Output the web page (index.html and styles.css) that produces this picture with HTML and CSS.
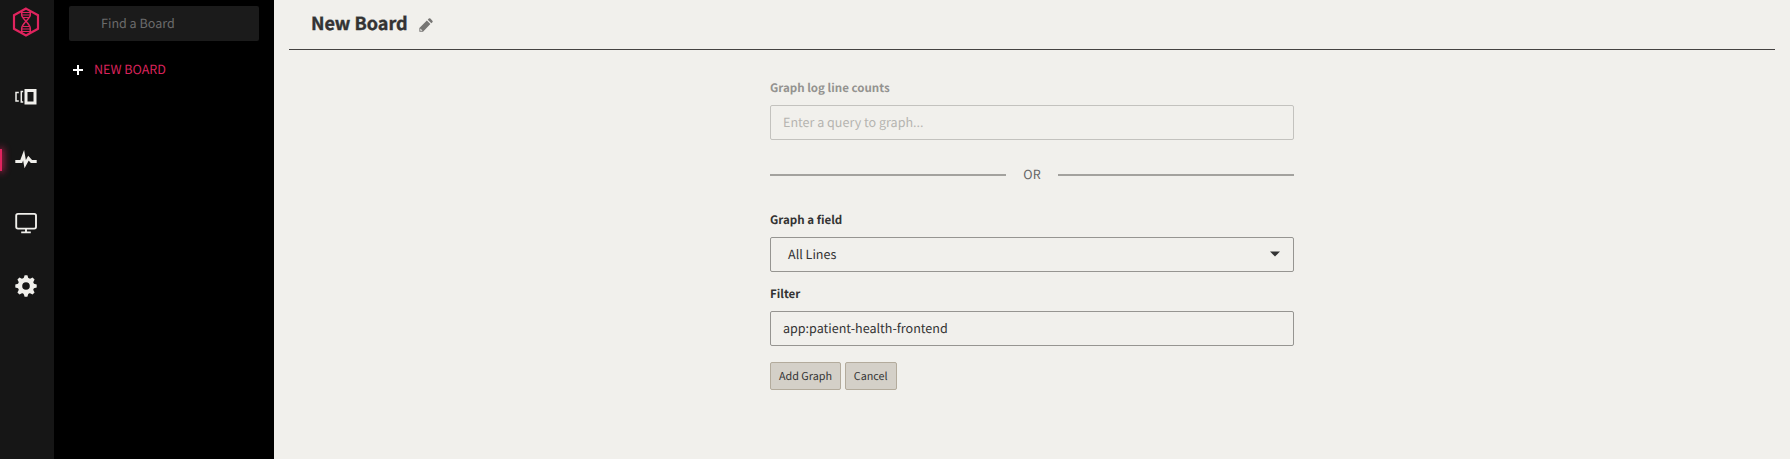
FILE: index.html
```html
<!DOCTYPE html>
<html lang="en">
<head>
<meta charset="utf-8">
<title>New Board</title>
<link rel="stylesheet" href="styles.css">
</head>
<body>
<div class="app">
  <nav class="rail">
    <a class="rail-logo">
      <svg width="28" height="30" viewBox="0 0 28 30" fill="none" stroke="#e0245e">
        <path d="M14 1.600 26 8.200V21.800L14 28.400 2 21.800V8.200Z" stroke-width="2.200"/>
        <path d="M9.700 4.200V8c0 4 8.600 8 8.600 13.500V26M18.300 4.200V8c0 4-8.600 8-8.600 13.500V26" stroke-width="1.500"/>
        <path d="M10 5.500h8M10 8h8M11 10.500h6M11 19.500h6M10 22h8M10 24.500h8" stroke-width="1.200"/>
      </svg>
    </a>
    <a class="rail-item">
      <svg width="24" height="24" viewBox="0 0 24 24" fill="none" stroke="#f0efeb">
        <path d="M12 5.500h9v12.500h-9z" stroke-width="3"/>
        <path d="M9.200 6.500H7.300v10.500h1.900M4.800 7.500H2v8.500h2.800" stroke-width="1.500"/>
      </svg>
    </a>
    <a class="rail-item rail-item-active">
      <svg width="24" height="24" viewBox="0 0 24 24" fill="none" stroke="#f0efeb" stroke-width="2.800">
        <path d="M1.300 13.500H7.200L9.600 7.200 11.200 16.200 14.500 10.200 17.500 13.500H22.700"/>
      </svg>
    </a>
    <a class="rail-item">
      <svg width="24" height="24" viewBox="0 0 24 24" fill="none" stroke="#f0efeb" stroke-width="1.900">
        <rect x="2.200" y="2.900" width="19.800" height="14.700" rx="1.800"/>
        <path d="M12 17.500V21M7.200 21.400h9.600"/>
      </svg>
    </a>
    <a class="rail-item">
      <svg width="24" height="24" viewBox="0 0 24 24">
        <g fill="#f0efeb">
          <path id="tooth" d="M9.400 5 10.600 1.300h2.800L14.600 5z"/>
          <use href="#tooth" transform="rotate(45 12 12)"/>
          <use href="#tooth" transform="rotate(90 12 12)"/>
          <use href="#tooth" transform="rotate(135 12 12)"/>
          <use href="#tooth" transform="rotate(180 12 12)"/>
          <use href="#tooth" transform="rotate(225 12 12)"/>
          <use href="#tooth" transform="rotate(270 12 12)"/>
          <use href="#tooth" transform="rotate(315 12 12)"/>
        </g>
        <circle cx="12" cy="12" r="6" fill="none" stroke="#f0efeb" stroke-width="4.400"/>
      </svg>
    </a>
  </nav>
  <aside class="boards">
    <input class="boards-search" type="text" placeholder="Find a Board">
    <a class="boards-new">
      <svg width="10" height="10" viewBox="0 0 10 10" stroke="#fff" stroke-width="2"><path d="M5 0v10M0 5h10"/></svg>
      <span>NEW BOARD</span>
    </a>
  </aside>
  <main class="main">
    <header class="header">
      <h1 class="title">New Board</h1>
      <svg class="pencil" width="14" height="14" viewBox="0 0 16 16">
        <path fill="#777674" d="M.4 15.600V11.400L9 2.900 13 6.900 4.600 15.600ZM10 1.900 11.200 .7q.9-.8 1.800 0l2.300 2.300q.8.900 0 1.800L14.100 6Z"/>
        <path fill="#f0efeb" d="m1.500 12 2.400 2.400-.5.300H1.500z"/>
      </svg>
    </header>
    <form class="form">
      <label class="label label-muted">Graph log line counts</label>
      <input class="field field-muted" type="text" placeholder="Enter a query to graph...">
      <div class="or"><span>OR</span></div>
      <label class="label">Graph a field</label>
      <div class="field select">
        <span>All Lines</span>
        <svg width="10" height="6" viewBox="0 0 10 6"><path fill="#333" d="M0 .4h10L5 5.600z"/></svg>
      </div>
      <label class="label label-filter">Filter</label>
      <input class="field" type="text" value="app:patient-health-frontend">
      <div class="actions">
        <button class="btn btn-add" type="button">Add Graph</button>
        <button class="btn btn-cancel" type="button">Cancel</button>
      </div>
    </form>
  </main>
</div>
</body>
</html>
```

FILE: styles.css
```css
* { box-sizing: border-box; }

body {
  margin: 0;
  background: #f1f0ec;
  color: #333;
  font: 12.550px/20px "Noto Sans CJK SC", "Noto Sans", sans-serif;
  text-rendering: geometricPrecision;
  overflow: hidden;
}

input, button { font: inherit; color: inherit; text-rendering: inherit; }
svg { display: block; }

.app { display: flex; height: 459px; }

.rail {
  width: 54px;
  flex: none;
  background: #161616;
  display: flex;
  flex-direction: column;
}
.rail-logo { padding: 7px 0 0 12px; height: 65px; }
.rail-item {
  height: 63px;
  display: flex;
  align-items: center;
  padding-left: 14px;
}
.rail-item-active { position: relative; }
.rail-item-active::before {
  content: "";
  position: absolute;
  left: 0;
  top: 21px;
  width: 2px;
  height: 22px;
  background: #e0245e;
  box-shadow: 0 0 7px 1px #e0245e;
}

.boards {
  width: 220px;
  flex: none;
  background: #000;
  padding: 6px 15px 0;
}
.boards-search {
  display: block;
  width: 190px;
  height: 35px;
  border: 0;
  border-radius: 2px;
  background: #1b1b1b;
  padding: 0 12px 2px 32px;
}
.boards-search::placeholder { color: #6b6b6b; }
.boards-new {
  display: flex;
  align-items: center;
  gap: 11px;
  margin: 19px 0 0 4px;
  color: #d8235b;
}
.boards-new span { margin-top: -1px; }

.main { flex: 1; padding: 0 15px; }
.header {
  height: 50px;
  border-bottom: 1px solid #444241;
  display: flex;
  gap: 11px;
  padding: 8px 0 0 22px;
}
.title {
  margin: 0;
  font-size: 18px;
  line-height: 30px;
  font-weight: 700;
  -webkit-text-stroke: .4px;
}
.pencil { margin-top: 10px; }

.form { width: 524px; margin: 28px auto 0; }
.label {
  display: block;
  font-size: 11.550px;
  font-weight: 700;
  height: 27px;
}
.label-muted { color: #949390; }
.label-filter { margin-top: 12px; }
.field {
  display: block;
  width: 100%;
  height: 35px;
  border: 1px solid #969591;
  border-radius: 2px;
  background: transparent;
  padding: 0 12px 2px;
}
.field-muted { border-color: #c3c2be; }
.field-muted::placeholder { color: #b5b4b0; }
.select {
  display: flex;
  align-items: center;
  justify-content: space-between;
  padding: 0 13px 1px 17px;
}
.or {
  display: flex;
  align-items: center;
  height: 70px;
  color: #666;
}
.or span { width: 52px; margin-top: -2px; text-align: center; }
.or::before, .or::after { content: ""; flex: 1; height: 2px; background: #a3a29e; }

.actions { display: flex; gap: 4px; margin-top: 16px; }
.btn {
  height: 28px;
  padding: 0 0 1px;
  border: 1px solid #b3ab9c;
  border-radius: 2px;
  background: #d4d0c8;
  font-size: 10.800px;
  line-height: 20px;
}
.btn-add { width: 71px; }
.btn-cancel { width: 51.500px; }
```
